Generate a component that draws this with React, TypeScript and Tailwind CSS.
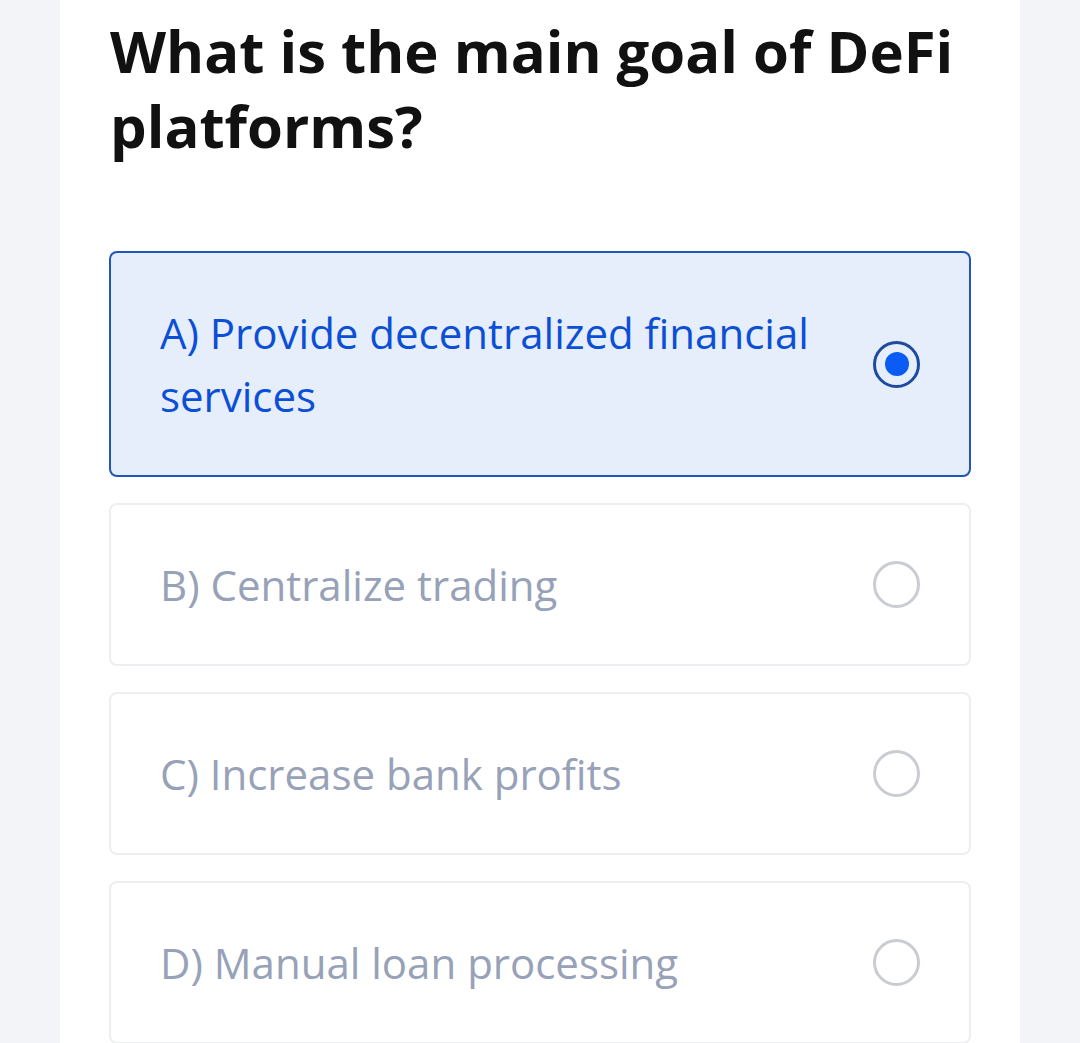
import React, { useState } from 'react';

const options = [
  'A) Provide decentralized financial services',
  'B) Centralize trading',
  'C) Increase bank profits',
  'D) Manual loan processing',
];

export default function App() {
  const [selected, setSelected] = useState(0);

  return (
    <div className="min-h-screen bg-[#f3f4f8] flex justify-center" style={{ fontFamily: '"Open Sans", "Noto Sans", sans-serif' }}>
      <div className="w-[960px] bg-white px-[49px] pt-[13px]">
        <h1 className="text-[58px] leading-[75px] font-bold text-[#111111] pl-px pr-4">
          What is the main goal of DeFi platforms?
        </h1>

        <div className="mt-[88px] flex flex-col gap-[26px]">
          {options.map((opt, i) => {
            const active = i === selected;
            return (
              <button
                key={opt}
                onClick={() => setSelected(i)}
                className={`w-full text-left flex items-center justify-between rounded-lg px-[49px] py-[48px] ${
                  active
                    ? 'border-2 border-[#1f56b8] bg-[#e6eefc]'
                    : 'border-2 border-[#eceef1] bg-white'
                }`}
              >
                <span
                  className={`text-[42px] leading-[63px] font-medium max-w-[690px] ${
                    active ? 'text-[#0b4fd6]' : 'text-[#97a1b7]'
                  }`}
                >
                  {opt}
                </span>
                {active ? (
                  <span className="w-[47px] h-[47px] shrink-0 rounded-full border-[3px] border-[#1e4aa0] flex items-center justify-center">
                    <span className="w-[24px] h-[24px] rounded-full bg-[#0a5cf5]" />
                  </span>
                ) : (
                  <span className="w-[47px] h-[47px] shrink-0 rounded-full border-[3px] border-[#c9ccd2]" />
                )}
              </button>
            );
          })}
        </div>
      </div>
    </div>
  );
}
